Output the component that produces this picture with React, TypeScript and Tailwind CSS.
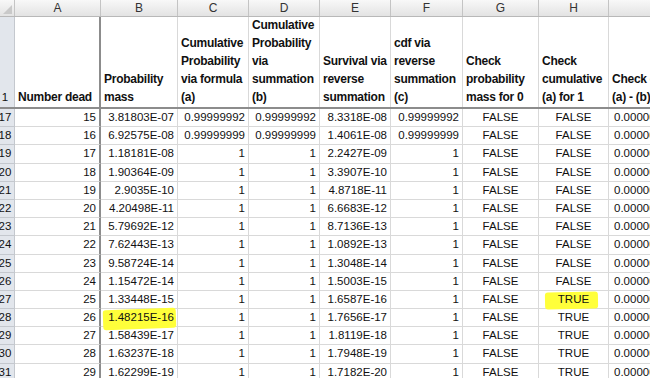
import React from "react";

type Row = {
  n: number;
  a: number;
  b: string;
  c: string;
  d: string;
  e: string;
  f: string;
  g: string;
  h: string;
};

const rows: Row[] = [
  { n: 17, a: 15, b: "3.81803E-07", c: "0.99999992", d: "0.99999992", e: "8.3318E-08", f: "0.99999992", g: "FALSE", h: "FALSE" },
  { n: 18, a: 16, b: "6.92575E-08", c: "0.99999999", d: "0.99999999", e: "1.4061E-08", f: "0.99999999", g: "FALSE", h: "FALSE" },
  { n: 19, a: 17, b: "1.18181E-08", c: "1", d: "1", e: "2.2427E-09", f: "1", g: "FALSE", h: "FALSE" },
  { n: 20, a: 18, b: "1.90364E-09", c: "1", d: "1", e: "3.3907E-10", f: "1", g: "FALSE", h: "FALSE" },
  { n: 21, a: 19, b: "2.9035E-10", c: "1", d: "1", e: "4.8718E-11", f: "1", g: "FALSE", h: "FALSE" },
  { n: 22, a: 20, b: "4.20498E-11", c: "1", d: "1", e: "6.6683E-12", f: "1", g: "FALSE", h: "FALSE" },
  { n: 23, a: 21, b: "5.79692E-12", c: "1", d: "1", e: "8.7136E-13", f: "1", g: "FALSE", h: "FALSE" },
  { n: 24, a: 22, b: "7.62443E-13", c: "1", d: "1", e: "1.0892E-13", f: "1", g: "FALSE", h: "FALSE" },
  { n: 25, a: 23, b: "9.58724E-14", c: "1", d: "1", e: "1.3048E-14", f: "1", g: "FALSE", h: "FALSE" },
  { n: 26, a: 24, b: "1.15472E-14", c: "1", d: "1", e: "1.5003E-15", f: "1", g: "FALSE", h: "FALSE" },
  { n: 27, a: 25, b: "1.33448E-15", c: "1", d: "1", e: "1.6587E-16", f: "1", g: "FALSE", h: "TRUE" },
  { n: 28, a: 26, b: "1.48215E-16", c: "1", d: "1", e: "1.7656E-17", f: "1", g: "FALSE", h: "TRUE" },
  { n: 29, a: 27, b: "1.58439E-17", c: "1", d: "1", e: "1.8119E-18", f: "1", g: "FALSE", h: "TRUE" },
  { n: 30, a: 28, b: "1.63237E-18", c: "1", d: "1", e: "1.7948E-19", f: "1", g: "FALSE", h: "TRUE" },
  { n: 31, a: 29, b: "1.62299E-19", c: "1", d: "1", e: "1.7182E-20", f: "1", g: "FALSE", h: "TRUE" },
];

// column widths incl. right border
const W = {
  hdr: "w-[15px]",
  a: "w-[86px]",
  b: "w-[77px]",
  c: "w-[71px]",
  d: "w-[71px]",
  e: "w-[71px]",
  f: "w-[72px]",
  g: "w-[76px]",
  h: "w-[70px]",
};

const cell = "shrink-0 border-r border-b border-[#d9d9d9] overflow-hidden";

const Marker = ({ className }: { className: string }) => (
  <span className={`absolute bg-[#ffff3a] rounded-[3px] ${className}`} />
);

const HeadText = ({ lines }: { lines: string[] }) => (
  <div className="flex flex-col justify-end h-full pl-[3px] pb-[1px] leading-[18px] text-[12px] font-bold tracking-[-0.25px] whitespace-nowrap">
    {lines.map((l, i) => (
      <span key={i}>{l}</span>
    ))}
  </div>
);

export default function App() {
  return (
    <div
      className="w-[650px] h-[378px] overflow-hidden bg-white text-[11.5px] text-[#111]"
      style={{ fontFamily: '"Liberation Sans", Arial, sans-serif' }}
    >
      {/* column letters */}
      <div className="flex h-[17px] bg-gradient-to-b from-[#f8f8f8] to-[#e3e3e3] border-b border-[#b8b8b8] text-[#333] text-[12px] leading-[16px]">
        <div className={`${W.hdr} shrink-0 border-r border-[#c4c4c4] relative`}>
          <svg className="absolute right-[2px] bottom-[2px]" width="9" height="9" viewBox="0 0 9 9">
            <polygon points="9,0 9,9 0,9" fill="#c9c9c9" />
          </svg>
        </div>
        {[
          [W.a, "A"],
          [W.b, "B"],
          [W.c, "C"],
          [W.d, "D"],
          [W.e, "E"],
          [W.f, "F"],
          [W.g, "G"],
          [W.h, "H"],
        ].map(([w, l]) => (
          <div key={l} className={`${w} shrink-0 border-r border-[#c4c4c4] text-center`}>
            {l}
          </div>
        ))}
        <div className="flex-1" />
      </div>

      {/* header row 1 */}
      <div className="flex h-[92px] border-b-2 border-[#8c8c8c]">
        <div className={`${W.hdr} shrink-0 bg-[#e2e6ec] border-r border-[#c4c8ce] overflow-hidden relative`}>
          <span className="absolute left-[-5px] bottom-[1px] w-[20px] text-center leading-[18px]">1</span>
        </div>
        <div className="w-[86px] shrink-0 border-r-2 border-[#8c8c8c]">
          <HeadText lines={["Number dead"]} />
        </div>
        <div className={`${W.b} ${cell} border-b-0`}>
          <HeadText lines={["Probability", "mass"]} />
        </div>
        <div className={`${W.c} ${cell} border-b-0`}>
          <HeadText lines={["Cumulative", "Probability", "via formula", "(a)"]} />
        </div>
        <div className={`${W.d} ${cell} border-b-0`}>
          <HeadText lines={["Cumulative", "Probability", "via", "summation", "(b)"]} />
        </div>
        <div className={`${W.e} ${cell} border-b-0`}>
          <HeadText lines={["Survival via", "reverse", "summation"]} />
        </div>
        <div className={`${W.f} ${cell} border-b-0`}>
          <HeadText lines={["cdf via", "reverse", "summation", "(c)"]} />
        </div>
        <div className={`${W.g} ${cell} border-b-0`}>
          <HeadText lines={["Check", "probability", "mass for 0"]} />
        </div>
        <div className={`${W.h} ${cell} border-b-0`}>
          <HeadText lines={["Check", "cumulative", "(a) for 1"]} />
        </div>
        <div className="flex-1 overflow-hidden">
          <HeadText lines={["Check cdf", "(a) - (b)"]} />
        </div>
      </div>

      {/* data rows */}
      {rows.map((r) => (
        <div key={r.n} className="flex h-[18.2px] leading-[17px]">
          <div className={`${W.hdr} shrink-0 bg-[#e2e6ec] border-r border-b border-[#c4c8ce] overflow-hidden relative`}>
            <span className="absolute left-[-5px] top-0 w-[20px] text-center">{r.n}</span>
          </div>
          <div className="w-[86px] shrink-0 border-r-2 border-b border-r-[#8c8c8c] border-b-[#d9d9d9] text-right pr-[3px]">
            {r.a}
          </div>
          <div className={`${W.b} ${cell} text-right pr-[3px] relative overflow-visible`}>
            {r.n === 28 && <Marker className="left-[2px] right-[1px] top-[0px] h-[20px] -rotate-2" />}
            <span className="relative">{r.b}</span>
          </div>
          <div className={`${W.c} ${cell} text-right pr-[3px]`}>{r.c}</div>
          <div className={`${W.d} ${cell} text-right pr-[3px]`}>{r.d}</div>
          <div className={`${W.e} ${cell} text-right pr-[3px]`}>{r.e}</div>
          <div className={`${W.f} ${cell} text-right pr-[3px]`}>{r.f}</div>
          <div className={`${W.g} ${cell} text-center`}>{r.g}</div>
          <div className={`${W.h} ${cell} text-center relative overflow-visible`}>
            {r.n === 27 && <Marker className="left-[6px] w-[53px] top-[1px] h-[17px] -rotate-1" />}
            <span className="relative">{r.h}</span>
          </div>
          <div className="flex-1 border-b border-[#d9d9d9] pl-[5px] whitespace-nowrap overflow-hidden">
            0.00000000
          </div>
        </div>
      ))}
    </div>
  );
}
